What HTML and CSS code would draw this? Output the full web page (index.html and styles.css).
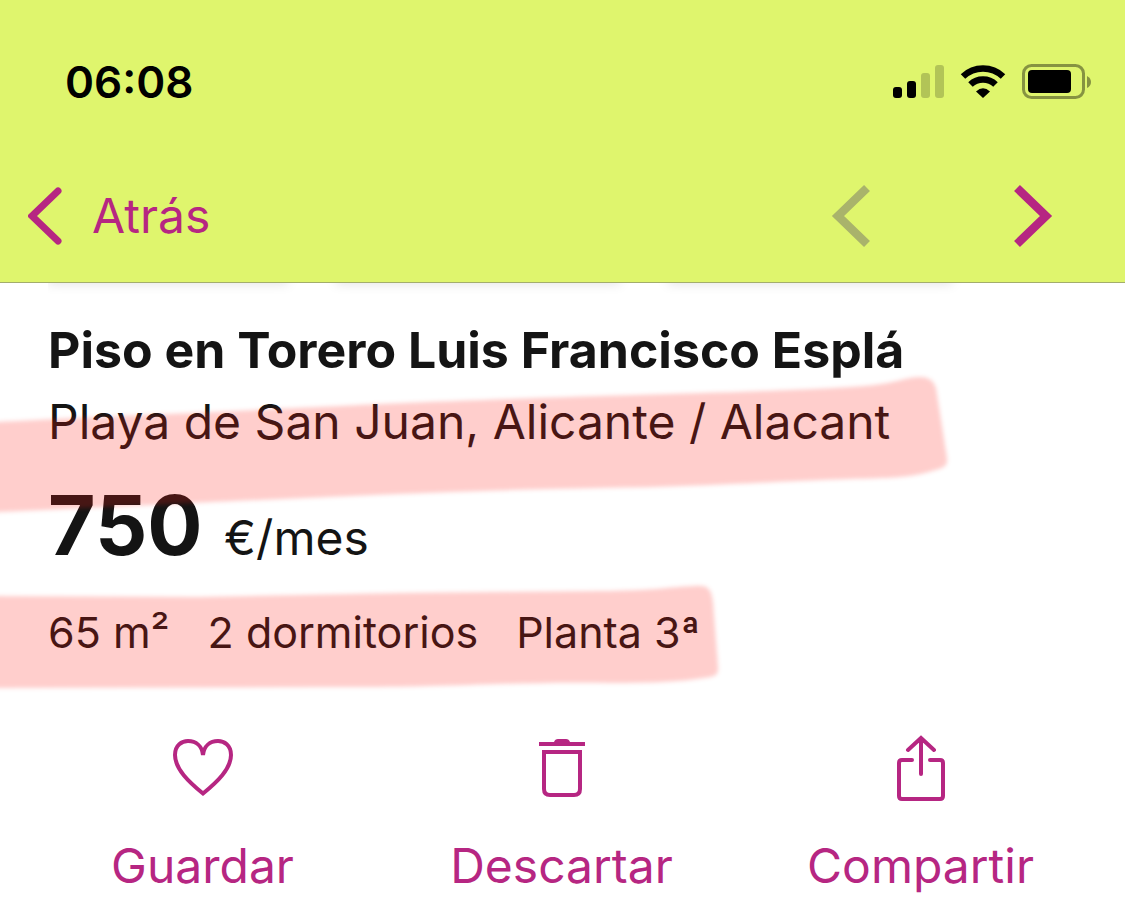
FILE: index.html
```
<!DOCTYPE html>
<html lang="es">
<head>
    <meta charset="UTF-8">
    <meta name="viewport" content="width=device-width, initial-scale=1.0">
    <title>Piso en Torero Luis Francisco Esplá</title>
    <link rel="stylesheet" href="styles.css">
</head>
<body>
    <header class="top">
        <div class="status-bar">
            <span class="clock">06:08</span>
            <div class="status-icons">
                <svg width="52" height="34" viewBox="0 0 52 34">
                    <rect x="1" y="22" width="9" height="11" rx="3"/>
                    <rect x="15" y="16" width="9" height="17" rx="3"/>
                    <rect x="29" y="8" width="9" height="25" rx="3" opacity=".2"/>
                    <rect x="43" y="0" width="9" height="33" rx="3" opacity=".2"/>
                </svg>
                <svg width="46" height="34" viewBox="0 0 46 34">
                    <path d="M3 11.500A29 29 0 0 1 43 11.500" fill="none" stroke="#000" stroke-width="6.500"/>
                    <path d="M10.500 19.500A18 18 0 0 1 35.500 19.500" fill="none" stroke="#000" stroke-width="6.500"/>
                    <path d="M16 26.500Q23 20 30 26.500L23 33Z"/>
                </svg>
                <svg width="70" height="36" viewBox="0 0 70 36">
                    <rect x="1.500" y="1.500" width="60" height="32" rx="8" fill="none" stroke="#000" stroke-width="3" opacity=".4"/>
                    <rect x="6" y="6" width="43" height="23" rx="4"/>
                    <path d="M65 12Q69 14 69 18T65 24Z" opacity=".4"/>
                </svg>
            </div>
        </div>
        <nav class="nav-bar">
            <a class="back" href="#">
                <svg width="34" height="58" viewBox="0 0 34 58">
                    <path d="M30 4L4 29L30 54" fill="none" stroke="#b62682" stroke-width="7" stroke-linecap="round"/>
                </svg>
                Atrás
            </a>
            <div class="pager">
                <button type="button" aria-label="Anterior" disabled>
                    <svg width="40" height="64" viewBox="0 0 40 64">
                        <path d="M36 4L7 32L36 60" fill="none" stroke="#a9b36b" stroke-width="8.500"/>
                    </svg>
                </button>
                <button type="button" aria-label="Siguiente">
                    <svg width="40" height="64" viewBox="0 0 40 64">
                        <path d="M4 4L33 32L4 60" fill="none" stroke="#b62682" stroke-width="8.500"/>
                    </svg>
                </button>
            </div>
        </nav>
    </header>

    <main class="listing">
        <div class="tab-shadows">
            <span></span>
            <span class="wide"></span>
            <span class="wide"></span>
        </div>
        <h1>Piso en Torero Luis Francisco Esplá</h1>
        <p class="location">Playa de San Juan, Alicante / Alacant</p>
        <p class="price"><strong>750</strong> €/mes</p>
        <ul class="features">
            <li>65 m²</li>
            <li>2 dormitorios</li>
            <li>Planta 3ª</li>
        </ul>
        <!-- rotulador sobre la zona y las características -->
        <svg class="marker" width="960" height="420" viewBox="0 283 960 420">
            <path d="M-20 423C60 418 200 413 380 404C560 396 700 394 790 390C860 387 880 386 905 379C922 375 932 376 936 388L947 458C948 466 944 468 932 471C910 478 890 478 850 479C780 481 700 487 600 488C420 491 200 503 -20 513Z"/>
            <path d="M-20 596L200 597L400 593L600 591C650 591 670 587 694 586C708 585 711 588 713 602L718 666C719 676 715 676 704 678C680 682 650 683 610 683C520 681 450 688 330 687L-20 688Z"/>
        </svg>
    </main>

    <div class="actions">
        <button type="button">
            <svg width="64" height="68" viewBox="0 0 64 68">
                <path d="M32 58.500C18 47 4 34 4 20C4 10 11 6 17 6C25 6 31 11 32 20C33 11 39 6 47 6C53 6 60 10 60 20C60 34 46 47 32 58.500Z" fill="none" stroke="#b62682" stroke-width="4"/>
            </svg>
            Guardar
        </button>
        <button type="button">
            <svg width="64" height="68" viewBox="0 0 64 68">
                <path d="M9 7H24Q25 4 28 4H36Q39 4 40 7H55V11H9Z" fill="#b62682"/>
                <path d="M14 17H50V54Q50 60 44 60H20Q14 60 14 54Z" fill="none" stroke="#b62682" stroke-width="4"/>
            </svg>
            Descartar
        </button>
        <button type="button">
            <svg width="64" height="68" viewBox="0 0 64 68">
                <path d="M23 25H13Q10 25 10 28V61Q10 64 13 64H51Q54 64 54 61V28Q54 25 51 25H41M32 39V4M19 15L32 3L45 15" fill="none" stroke="#b62682" stroke-width="4" stroke-linecap="round"/>
            </svg>
            Compartir
        </button>
    </div>
</body>
</html>
```
FILE: styles.css
```
body {
    font-family: Inter, "Liberation Sans", sans-serif;
    margin: 0;
    background-color: #fff;
    color: #141414;
}
svg {
    display: block;
}
button {
    font: inherit;
    color: inherit;
    background: none;
    border: none;
    padding: 0;
    cursor: pointer;
}
.top {
    background-color: #dff56d;
    border-bottom: 1px solid #a3ad6c;
    padding-top: 52px;
}
.status-bar {
    display: flex;
    align-items: center;
    justify-content: space-between;
    height: 60px;
    padding: 0 33px 0 65px;
}
.clock {
    font-size: 44px;
    font-weight: 600;
    color: #000;
}
.status-icons {
    display: flex;
    align-items: center;
    gap: 16px;
}
.nav-bar {
    display: flex;
    align-items: center;
    justify-content: space-between;
    padding: 60px 72px 22px 28px;
}
.back {
    display: flex;
    align-items: center;
    gap: 30px;
    font-size: 48px;
    line-height: 88px;
    color: #b62682;
    text-decoration: none;
}
.pager {
    display: flex;
    gap: 142px;
}
.listing {
    position: relative;
    padding: 0 48px;
}
.tab-shadows {
    display: flex;
    gap: 48px;
    height: 36px;
    overflow: hidden;
}
.tab-shadows span {
    width: 240px;
    height: 4px;
    margin-top: -5px;
    box-shadow: 0 0 12px rgba(0,0,0,0.25);
}
.tab-shadows .wide {
    width: 284px;
}
h1 {
    margin: 0;
    font-size: 50px;
    line-height: 62px;
    font-weight: 700;
}
.location {
    margin: 10px 0 0;
    font-size: 48px;
    line-height: 62px;
}
.price {
    margin: 24px 0 0;
    font-size: 48px;
    line-height: 98px;
}
.price strong {
    font-size: 82px;
    margin-right: 8px;
}
.features {
    display: flex;
    gap: 38px;
    list-style: none;
    margin: 14px 0 0;
    padding: 0;
    font-size: 43px;
    line-height: 62px;
}
.marker {
    position: absolute;
    top: 0;
    left: 0;
    overflow: visible;
    fill: rgba(255,30,25,0.22);
    pointer-events: none;
}
.marker path {
    filter: blur(2px);
}
.actions {
    display: grid;
    grid-template-columns: repeat(3, 1fr);
    padding: 72px 25px 0 23px;
}
.actions button {
    display: flex;
    flex-direction: column;
    align-items: center;
    gap: 32px;
    font-size: 48px;
    line-height: 62px;
    color: #b62682;
}
```
